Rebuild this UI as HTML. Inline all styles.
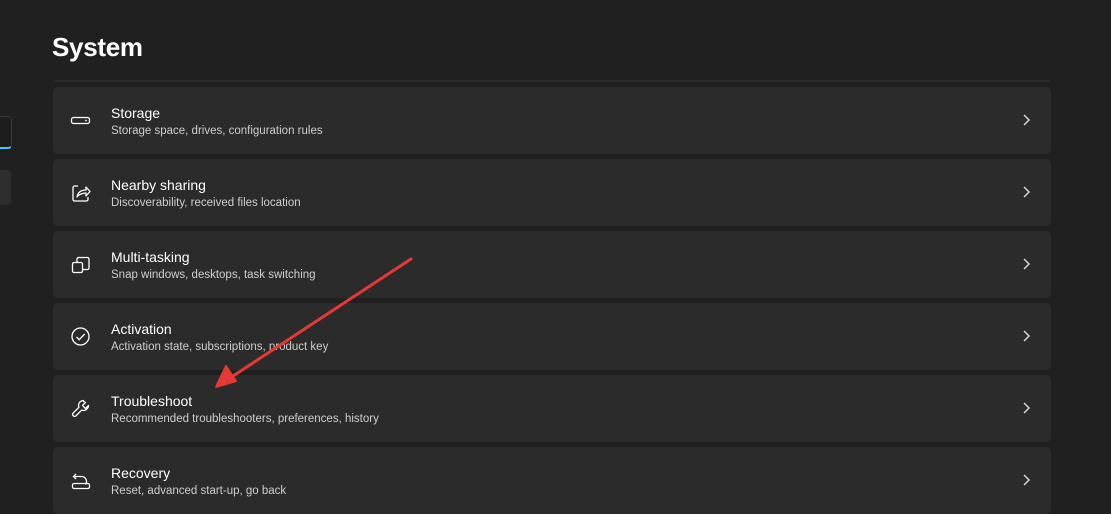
<!DOCTYPE html>
<html><head><style>
body{margin:0;width:1111px;height:510px;background:#202020;overflow:hidden;position:relative;font-family:"Segoe UI","Liberation Sans",sans-serif;color:#fff}
h1{position:absolute;left:52px;top:32px;margin:0;font-size:26px;font-weight:600;letter-spacing:-0.3px}
.line{position:absolute;left:55px;top:80px;width:995px;height:2px;background:#2b2b2b}
.card{position:absolute;left:53px;width:998px;height:67px;background:#2b2b2b;border-radius:5px}
.t{position:absolute;left:58px;top:18px;font-size:14px;color:#fff}
.s{position:absolute;left:58px;top:38px;font-size:11.5px;color:#cfcfcf}
.ic{position:absolute;left:17px;top:23px}
.ch{position:absolute;right:20px;top:27px}
.side1{position:absolute;left:-6px;top:116px;width:16px;height:30px;border:1px solid #3a3a3a;border-radius:4px;background:#1d1d1d;border-bottom:2px solid #4cc2ff}
.side2{position:absolute;left:-6px;top:170px;width:17px;height:35px;border-radius:4px;background:#2d2d2d}
</style></head><body>
<div class="side1"></div><div class="side2"></div>
<h1>System</h1>
<div class="line"></div>
<svg width="0" height="0" style="position:absolute"><defs><path id="chev" d="M1 1l5 5-5 5" fill="none" stroke="#ddd" stroke-width="1.4"/></defs></svg>

<div class="card" style="top:87px"><svg class="ic" width="22" height="22" viewBox="0 0 22 22"><rect x="1.5" y="7.5" width="18" height="6" rx="2" fill="none" stroke="#fff" stroke-width="1.3"/><circle cx="16" cy="10.5" r="0.9" fill="#fff"/></svg><div class="t">Storage</div><div class="s">Storage space, drives, configuration rules</div><svg class="ch" width="8" height="12"><use href="#chev"/></svg></div>

<div class="card" style="top:159px"><svg class="ic" width="22" height="22" viewBox="0 0 22 22"><path d="M8 4H4.5A1.5 1.5 0 0 0 3 5.5v12A1.5 1.5 0 0 0 4.5 19h12a1.5 1.5 0 0 0 1.5-1.5V15" fill="none" stroke="#fff" stroke-width="1.3"/><path d="M7 15c1-5 4-7 9-7V5l4 4.5-4 4.5v-3c-4 0-6.5 1.5-9 3.5z" fill="none" stroke="#fff" stroke-width="1.3" stroke-linejoin="round"/></svg><div class="t">Nearby sharing</div><div class="s">Discoverability, received files location</div><svg class="ch" width="8" height="12"><use href="#chev"/></svg></div>

<div class="card" style="top:231px"><svg class="ic" width="22" height="22" viewBox="0 0 22 22"><rect x="2.5" y="8.5" width="10" height="10" rx="1.5" fill="none" stroke="#fff" stroke-width="1.3"/><path d="M7 8V5a1.5 1.5 0 0 1 1.5-1.5h9A1.5 1.5 0 0 1 19 5v9a1.5 1.5 0 0 1-1.5 1.5H13" fill="none" stroke="#fff" stroke-width="1.3"/></svg><div class="t">Multi-tasking</div><div class="s">Snap windows, desktops, task switching</div><svg class="ch" width="8" height="12"><use href="#chev"/></svg></div>

<div class="card" style="top:303px"><svg class="ic" width="22" height="22" viewBox="0 0 22 22"><circle cx="10.5" cy="10.5" r="8.5" fill="none" stroke="#fff" stroke-width="1.3"/><path d="M6.5 11l2.7 2.7 5.5-5.7" fill="none" stroke="#fff" stroke-width="1.3"/></svg><div class="t">Activation</div><div class="s">Activation state, subscriptions, product key</div><svg class="ch" width="8" height="12"><use href="#chev"/></svg></div>

<div class="card" style="top:375px"><svg class="ic" width="22" height="22" viewBox="0 0 22 22"><path d="M13.5 2.5a5 5 0 0 0-4.6 6.8L3 15.2a2 2 0 0 0 2.8 2.8l5.9-5.9A5 5 0 0 0 18.5 7.5l-3 3-3-3 3-3a5 5 0 0 0-2-.9z" fill="none" stroke="#fff" stroke-width="1.3" stroke-linejoin="round"/></svg><div class="t">Troubleshoot</div><div class="s">Recommended troubleshooters, preferences, history</div><svg class="ch" width="8" height="12"><use href="#chev"/></svg></div>

<div class="card" style="top:447px"><svg class="ic" width="22" height="22" viewBox="0 0 22 22"><path d="M6 4L3.5 6.5 6 9" fill="none" stroke="#fff" stroke-width="1.3"/><path d="M3.5 6.5h8a5 5 0 0 1 4 8" fill="none" stroke="#fff" stroke-width="1.3"/><rect x="2.5" y="13.5" width="17" height="5" rx="1.5" fill="none" stroke="#fff" stroke-width="1.3"/></svg><div class="t">Recovery</div><div class="s">Reset, advanced start-up, go back</div><svg class="ch" width="8" height="12"><use href="#chev"/></svg></div>

<svg style="position:absolute;left:0;top:0" width="1111" height="510"><line x1="411" y1="259" x2="230" y2="378" stroke="#e53935" stroke-width="3" stroke-linecap="round"/><path d="M216 387L226 366L236 381Z" fill="#e53935" stroke="#e53935" stroke-width="2" stroke-linejoin="round"/></svg>
</body></html>
